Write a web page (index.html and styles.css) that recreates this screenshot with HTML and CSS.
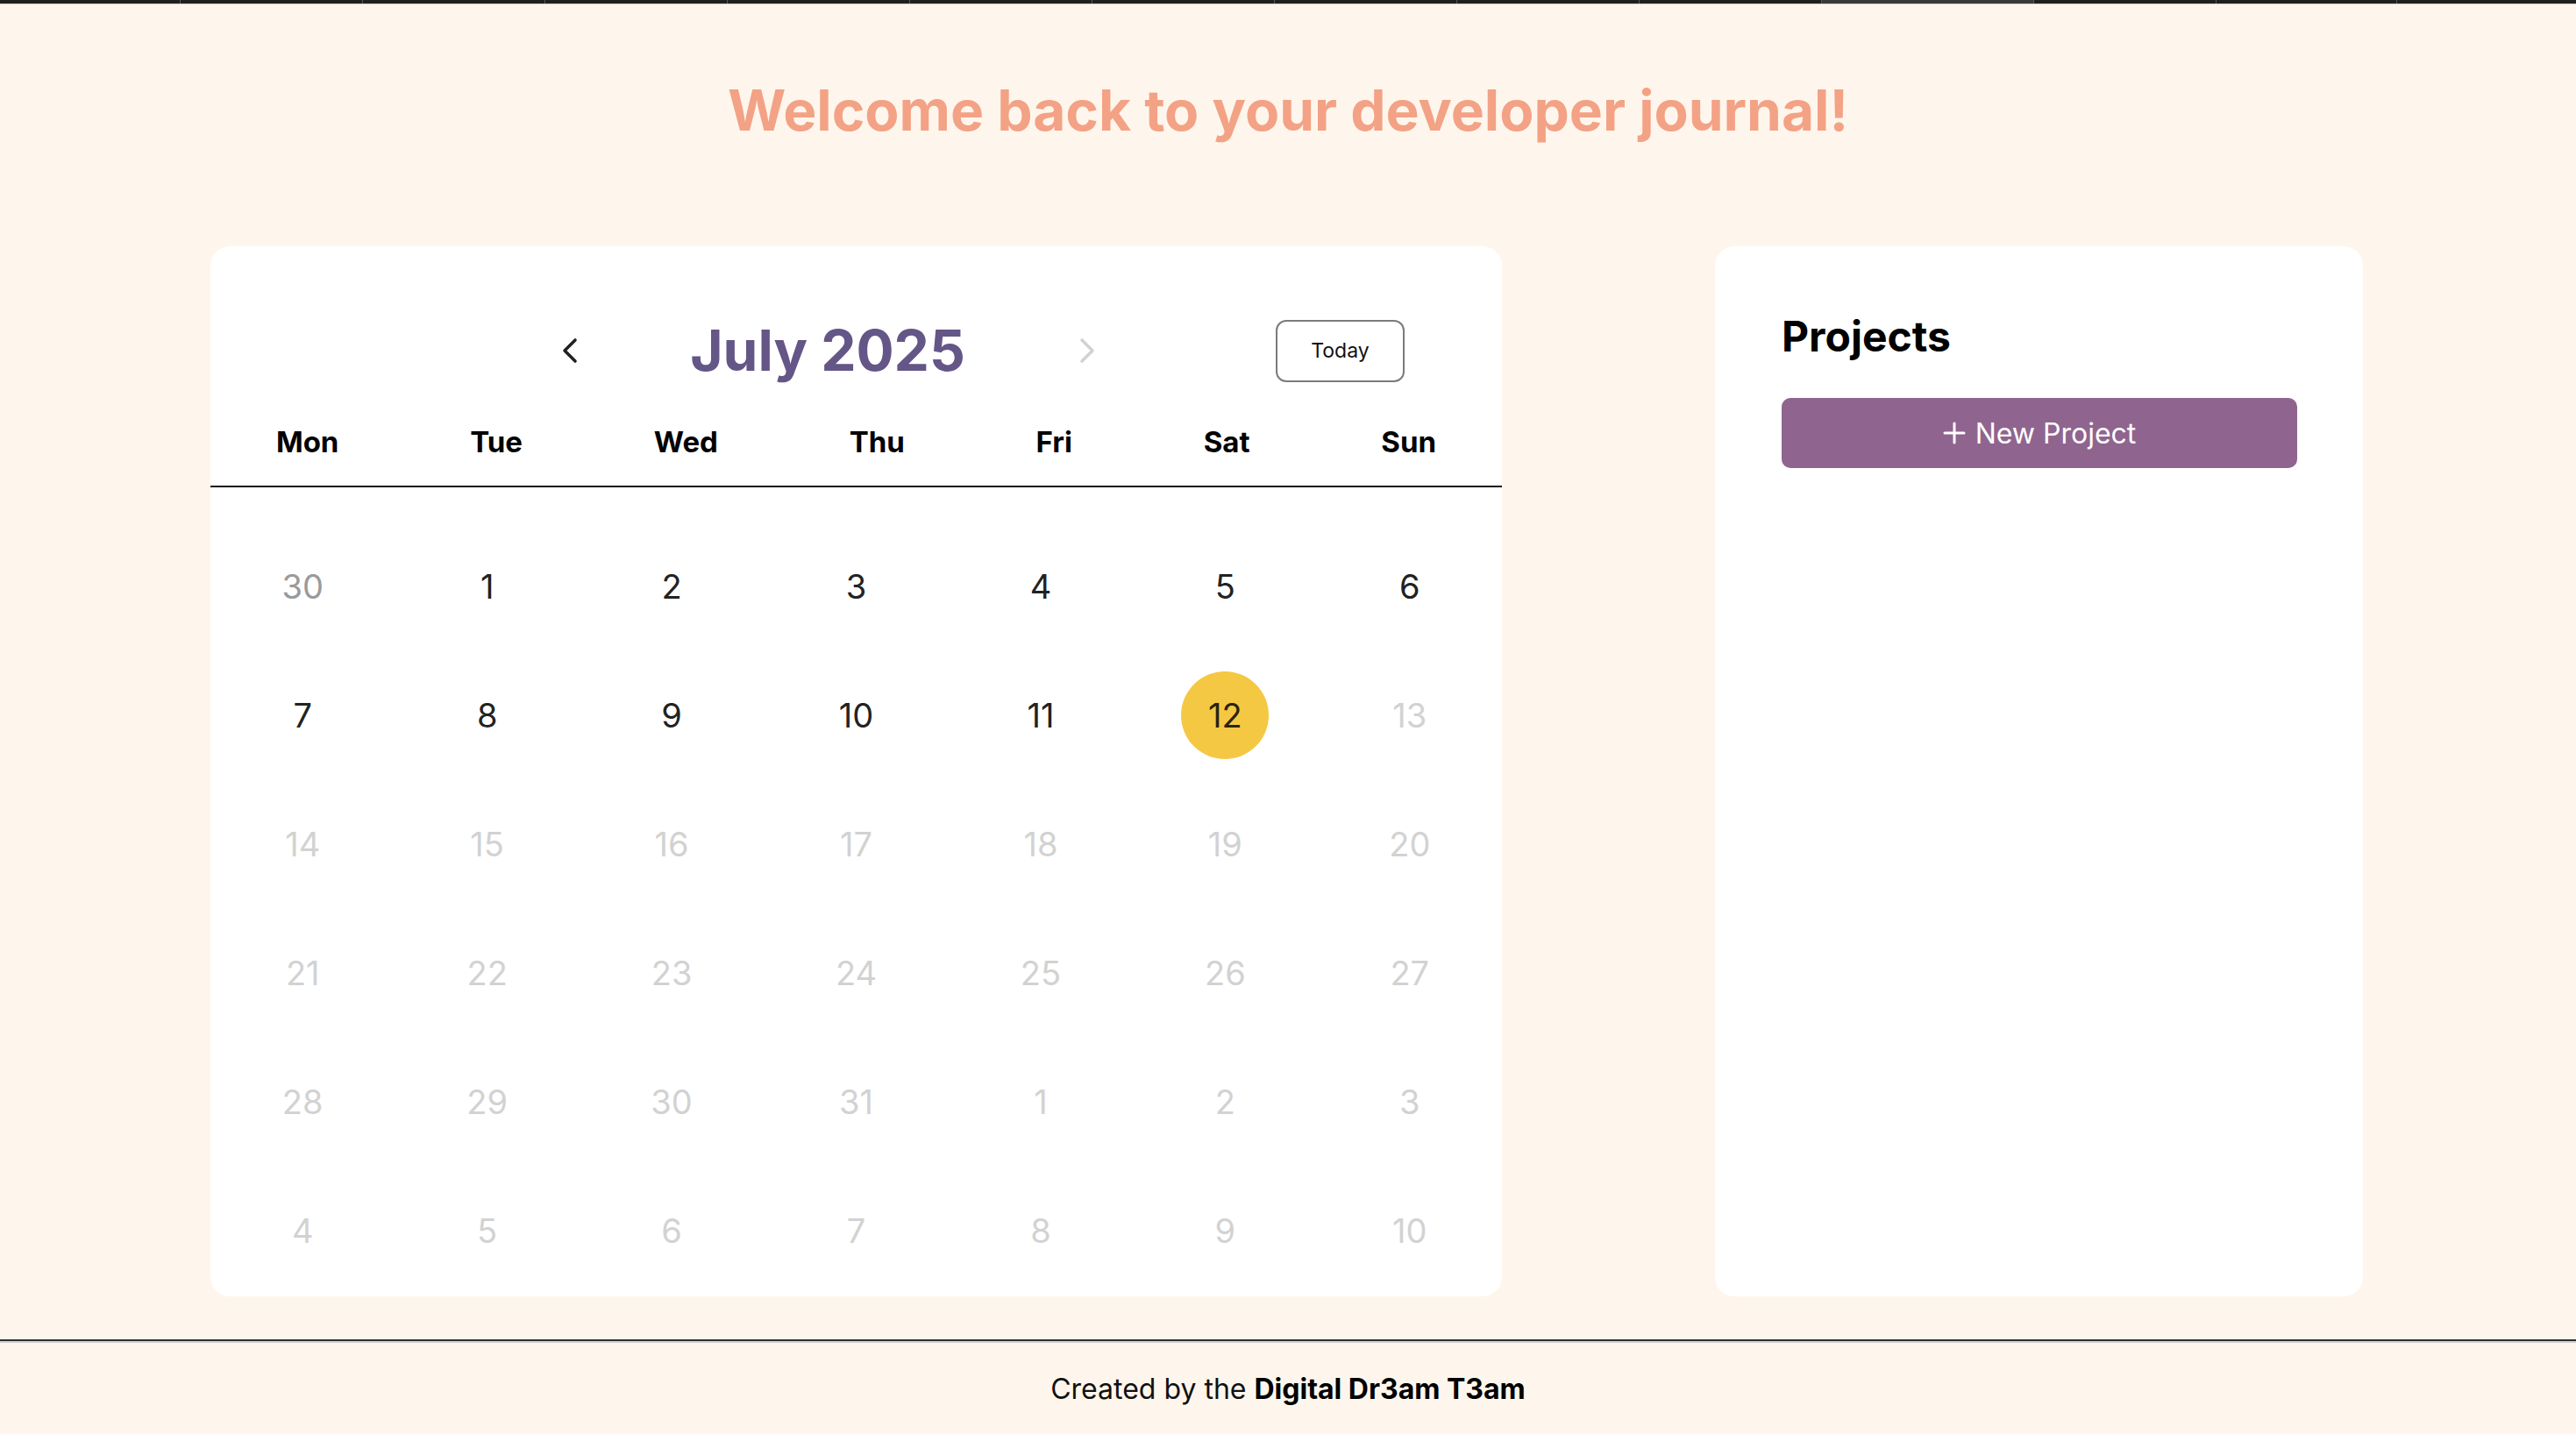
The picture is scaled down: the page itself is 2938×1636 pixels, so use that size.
FILE: index.html
```html
<!DOCTYPE html>
<html lang="en">
<head>
<meta charset="utf-8">
<title>Developer Journal</title>
<link rel="stylesheet" href="styles.css">
</head>
<body>
  <div class="tabstrip">
    <span class="tab tab-first"></span>
    <span class="tab"></span><span class="tab"></span><span class="tab"></span>
    <span class="tab"></span><span class="tab"></span><span class="tab"></span>
    <span class="tab"></span><span class="tab"></span><span class="tab"></span>
    <span class="tab tab-active"></span>
    <span class="tab"></span>
    <span class="tab tab-narrow"></span>
    <span class="tab tab-last"></span>
  </div>

  <h1 class="welcome">Welcome back to your developer journal!</h1>

  <main class="layout">
    <section class="card calendar">
      <div class="cal-header">
        <button class="nav-btn nav-prev" aria-label="Previous month">
          <svg width="18" height="30" viewBox="0 0 18 30"><polyline points="15,3 3,15 15,27" fill="none" stroke="currentColor" stroke-width="3.6" stroke-linecap="round" stroke-linejoin="round"/></svg>
        </button>
        <h2 class="month">July 2025</h2>
        <button class="nav-btn nav-next" aria-label="Next month">
          <svg width="18" height="30" viewBox="0 0 18 30"><polyline points="3,3 15,15 3,27" fill="none" stroke="currentColor" stroke-width="3.6" stroke-linecap="round" stroke-linejoin="round"/></svg>
        </button>
        <button class="today-btn">Today</button>
      </div>

      <div class="weekdays">
        <span>Mon</span><span>Tue</span><span>Wed</span><span>Thu</span><span>Fri</span><span>Sat</span><span>Sun</span>
      </div>

      <div class="days">
        <div class="day prev-month">30</div>
        <div class="day">1</div>
        <div class="day">2</div>
        <div class="day">3</div>
        <div class="day">4</div>
        <div class="day">5</div>
        <div class="day">6</div>

        <div class="day">7</div>
        <div class="day">8</div>
        <div class="day">9</div>
        <div class="day">10</div>
        <div class="day">11</div>
        <div class="day"><span class="today-mark">12</span></div>
        <div class="day future">13</div>

        <div class="day future">14</div>
        <div class="day future">15</div>
        <div class="day future">16</div>
        <div class="day future">17</div>
        <div class="day future">18</div>
        <div class="day future">19</div>
        <div class="day future">20</div>

        <div class="day future">21</div>
        <div class="day future">22</div>
        <div class="day future">23</div>
        <div class="day future">24</div>
        <div class="day future">25</div>
        <div class="day future">26</div>
        <div class="day future">27</div>

        <div class="day future">28</div>
        <div class="day future">29</div>
        <div class="day future">30</div>
        <div class="day future">31</div>
        <div class="day future">1</div>
        <div class="day future">2</div>
        <div class="day future">3</div>

        <div class="day future">4</div>
        <div class="day future">5</div>
        <div class="day future">6</div>
        <div class="day future">7</div>
        <div class="day future">8</div>
        <div class="day future">9</div>
        <div class="day future">10</div>
      </div>
    </section>

    <aside class="card projects">
      <h2 class="projects-title">Projects</h2>
      <button class="new-project">
        <svg width="26" height="26" viewBox="0 0 26 26"><path d="M13 2 V24 M2 13 H24" stroke="currentColor" stroke-width="3" stroke-linecap="round" fill="none"/></svg>
        <span>New Project</span>
      </button>
    </aside>
  </main>

  <footer class="footer">
    <hr class="footer-rule">
    <p class="credit">Created by the <strong>Digital Dr3am T3am</strong></p>
  </footer>
</body>
</html>
```

FILE: styles.css
```css
* {
  box-sizing: border-box;
}

html, body {
  margin: 0;
  padding: 0;
}

body {
  background: #fef6ec;
  font-family: "Inter", "Noto Sans", "Liberation Sans", sans-serif;
  color: #111;
  height: 1636px;
  overflow: hidden;
}

/* top tab strip */
.tabstrip {
  display: flex;
  height: 5px;
  background: #1f1f1f;
  border-bottom: 1px solid #d3cbbd;
}

.tab {
  width: 208px;
  flex: none;
  border-left: 1px solid #565656;
}

.tab-first {
  width: 205px;
  border-left: none;
}

.tab-active {
  width: 242px;
  background: #393939;
}

.tab-narrow {
  width: 206px;
}

.tab-last {
  width: 205px;
}

/* heading */
.welcome {
  margin: 82px 0 116px;
  text-align: center;
  font-size: 64px;
  line-height: 78px;
  font-weight: 700;
  color: #f3a286;
  letter-spacing: 0;
}

/* main layout */
.layout {
  width: 2455px;
  margin: 0 0 0 240px;
  display: grid;
  grid-template-columns: 1473fr 739fr;
  column-gap: 243px;
}

.card {
  background: #ffffff;
  border-radius: 22px;
}

/* calendar */
.calendar {
  padding-top: 80px;
  padding-bottom: 2px;
}

.cal-header {
  display: flex;
  align-items: center;
  height: 78px;
  padding-left: 392px;
  margin-bottom: 45px;
}

.nav-btn {
  width: 36px;
  height: 40px;
  padding: 0;
  border: none;
  background: none;
  display: flex;
  align-items: center;
  justify-content: center;
}

.nav-prev {
  color: #222222;
}

.nav-next {
  color: #d2d2d2;
  margin-left: 2px;
}

.month {
  width: 552px;
  margin: 0;
  text-align: center;
  font-size: 64px;
  line-height: 78px;
  font-weight: 700;
  color: #645687;
}

.today-btn {
  margin-left: 197px;
  width: 147px;
  height: 71px;
  border: 2px solid #7b7b7b;
  border-radius: 12px;
  background: #fff;
  font-family: inherit;
  font-size: 23px;
  color: #111;
  padding: 0;
}

.weekdays {
  display: flex;
  justify-content: space-around;
  padding-bottom: 30px;
  border-bottom: 2px solid #111;
  font-size: 33px;
  line-height: 40px;
  font-weight: 700;
  color: #000;
}

.days {
  padding-top: 39px;
  display: grid;
  grid-template-columns: repeat(7, 1fr);
  grid-auto-rows: 147px;
}

.day {
  display: flex;
  align-items: center;
  justify-content: center;
  font-size: 38px;
  color: #222222;
}

.day.prev-month {
  color: #9a9a9a;
}

.day.future {
  color: #d2d2d2;
}

.today-mark {
  width: 100px;
  height: 100px;
  border-radius: 50%;
  background: #f5c843;
  color: #2a2412;
  display: flex;
  align-items: center;
  justify-content: center;
}

/* projects */
.projects {
  padding: 74px 75px 76px 76px;
}

.projects-title {
  margin: 0 0 41px;
  font-size: 48px;
  line-height: 58px;
  font-weight: 700;
  color: #000;
}

.new-project {
  width: 100%;
  height: 80px;
  border: none;
  border-radius: 10px;
  background: #8f658f;
  color: #fff;
  font-family: inherit;
  font-size: 32px;
  display: flex;
  align-items: center;
  justify-content: center;
  gap: 11px;
  padding: 0;
}

/* footer */
.footer {
  margin-top: 49px;
  text-align: center;
}

.footer-rule {
  margin: 0;
  height: 0;
  border: none;
  border-top: 2px solid #2f2f2f;
  border-bottom: 2px solid #d2d0cc;
}

.credit {
  margin: 0;
  padding: 33px 0 32px;
  font-size: 32px;
  line-height: 39px;
  color: #111;
}

.credit strong {
  font-weight: 700;
  color: #000;
}
```
